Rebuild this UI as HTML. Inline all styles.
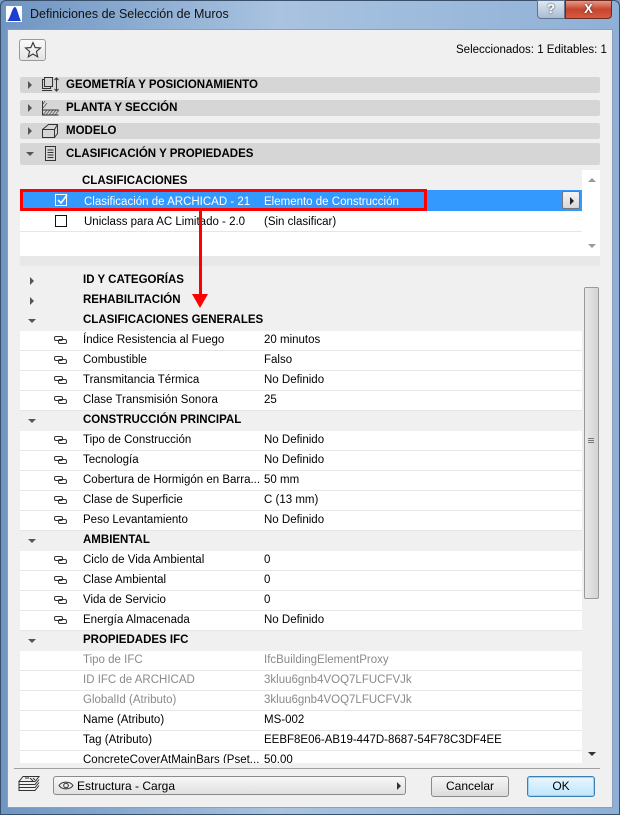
<!DOCTYPE html>
<html><head><meta charset="utf-8"><style>
*{box-sizing:border-box;margin:0;padding:0}
body{width:620px;height:815px;overflow:hidden;background:#7a9cc6;font-family:"Liberation Sans",Arial,sans-serif;font-size:11.5px;color:#000;position:relative}
.abs{position:absolute}
#frame{left:0;top:0;width:620px;height:815px;background:linear-gradient(90deg,#6f95c2 0%,#a9c3e0 45%,#8fb0d6 100%);border:1px solid #3a4f6a;border-radius:6px 6px 0 0}
#content{left:7px;top:29px;width:606px;height:779px;background:#f0f0f0;border:1px solid #8aa0ba}
.title{left:30px;top:7px;font-size:12.5px;color:#111}
.bar{left:20px;width:580px;height:16px;background:#d6d6d6;border-radius:2px;font-weight:bold;font-size:11.5px}
.bar span{position:absolute;left:46px;top:2px}
.tri{position:absolute;width:0;height:0;border-top:4px solid transparent;border-bottom:4px solid transparent;border-left:4px solid #555}
.trid{position:absolute;width:0;height:0;border-left:4px solid transparent;border-right:4px solid transparent;border-top:4px solid #555}
.row{position:absolute;left:0;width:562px;height:20px;background:#fff;border-bottom:1px solid #e6e6e6}
.row.g{background:#f0f0f0;border-bottom:none;font-weight:bold}
.row .n{position:absolute;left:63px;top:3px;white-space:nowrap}
.row .v{position:absolute;left:244px;top:3px;white-space:nowrap}
.row.gr .n,.row.gr .v{color:#8a8a8a}
.lk{position:absolute;left:34px;top:5px;width:14px;height:9px}
.btn{background:linear-gradient(#f6f6f6,#dcdcdc);border:1px solid #8a8a8a;border-radius:3px;text-align:center;line-height:19px;font-size:12px}
</style></head><body>
<div class="abs" id="frame"></div>
<svg class="abs" style="left:6px;top:6px" width="16" height="16"><rect width="16" height="16" fill="#fff"/><path d="M1 15 C4 14 6 1 9 1 C11 1 13 12 15 15Z" fill="#1d3fcf"/></svg>
<div class="abs title">Definiciones de Selección de Muros</div>
<div class="abs" style="left:537px;top:0;width:28px;height:19px;background:linear-gradient(#dfe8f3,#aabcd2);border:1px solid #5d7390;border-radius:0 0 0 4px;text-align:center;font-weight:bold;color:#fff;font-size:13px;text-shadow:0 0 2px #333">?</div>
<div class="abs" style="left:565px;top:0;width:47px;height:19px;background:linear-gradient(#e69a86,#c6452d 50%,#d75b40);border:1px solid #6b2b22;border-radius:0 0 4px 0;text-align:center;font-weight:bold;color:#fff;font-size:13px;text-shadow:0 0 2px #333">X</div>
<div class="abs" id="content"></div>
<div class="abs" style="left:19px;top:39px;width:27px;height:22px;border:1px solid #999;border-radius:3px;background:linear-gradient(#fafafa,#e4e4e4)"></div>
<svg class="abs" style="left:24px;top:41px" width="18" height="18"><path d="M9 1.5 L11.2 6.6 L16.5 7 L12.4 10.5 L13.7 15.8 L9 13 L4.3 15.8 L5.6 10.5 L1.5 7 L6.8 6.6Z" fill="none" stroke="#333" stroke-width="1.1"/></svg>
<div class="abs" style="left:456px;top:44px;font-size:11.5px">Seleccionados: 1 Editables: 1</div>

<div class="abs bar" style="top:77px"><div class="tri" style="left:8px;top:4px"></div><svg style="position:absolute;left:21px;top:0" width="22" height="16"><rect x="1.5" y="2.5" width="8" height="9" fill="none" stroke="#333"/><rect x="3.5" y="0.5" width="8" height="9" fill="#d6d6d6" stroke="#333"/><path d="M1 13.5h10M15.5 1v13M13.5 3l2-2 2 2M13.5 12l2 2 2-2" stroke="#333" fill="none"/></svg><span>GEOMETRÍA Y POSICIONAMIENTO</span></div>
<div class="abs bar" style="top:100px"><div class="tri" style="left:8px;top:4px"></div><svg style="position:absolute;left:21px;top:0" width="22" height="16"><path d="M1.5 1v14h16M1.5 10h16" stroke="#333" fill="none"/><path d="M2 15l4-5M5 15l4-5M8 15l4-5M11 15l4-5M14 15l4-5M2 8l4-5M2 4l2-3" stroke="#555" fill="none" stroke-width=".8"/></svg><span>PLANTA Y SECCIÓN</span></div>
<div class="abs bar" style="top:123px"><div class="tri" style="left:8px;top:4px"></div><svg style="position:absolute;left:21px;top:0" width="22" height="16"><path d="M1.5 6.5h12v8h-12zM1.5 6.5l6-5h9v9l-3 4M13.5 6.5l3-5" stroke="#333" fill="none"/></svg><span>MODELO</span></div>
<div class="abs bar" style="top:143px;height:22px"><div class="trid" style="left:6px;top:9px"></div><svg style="position:absolute;left:24px;top:3px" width="14" height="16"><rect x="1.5" y=".5" width="10" height="14" fill="none" stroke="#333"/><path d="M3.5 4h6M3.5 6.5h6M3.5 9h6M3.5 11.5h6" stroke="#333"/></svg><span style="top:5px">CLASIFICACIÓN Y PROPIEDADES</span></div>

<!-- classification list -->
<div class="abs" style="left:20px;top:170px;width:580px;height:86px;background:#fff"></div>
<div class="abs" style="left:20px;top:170px;width:562px;height:20px;background:#f0f0f0"></div>
<div class="abs" style="left:82px;top:175px;font-weight:bold">CLASIFICACIONES</div>
<div class="abs" style="left:20px;top:190px;width:562px;height:21px;background:#3399ff"></div>
<div class="abs" style="left:562px;top:191px;width:18px;height:18px;background:linear-gradient(#f5f5f5,#d8d8d8);border:1px solid #777;border-radius:2px"><div class="tri" style="left:7px;top:5px;border-left-color:#222"></div></div>
<div class="abs" style="left:55px;top:194px;width:12px;height:12px;border:1px solid #fff"></div>
<svg class="abs" style="left:56px;top:194px" width="12" height="12"><path d="M2 6l3 3 6-8" stroke="#fff" stroke-width="1.6" fill="none"/></svg>
<div class="abs" style="left:84px;top:196px;color:#fff">Clasificación de ARCHICAD - 21</div>
<div class="abs" style="left:264px;top:196px;color:#fff">Elemento de Construcción</div>
<div class="abs" style="left:20px;top:211px;width:562px;height:21px;border-bottom:1px solid #e6e6e6"></div>
<div class="abs" style="left:55px;top:215px;width:12px;height:12px;border:1px solid #111"></div>
<div class="abs" style="left:84px;top:216px">Uniclass para AC Limitado - 2.0</div>
<div class="abs" style="left:264px;top:216px">(Sin clasificar)</div>
<div class="trid abs" style="left:588px;top:178px;transform:rotate(180deg);border-top-color:#999"></div>
<div class="trid abs" style="left:588px;top:244px;border-top-color:#999"></div>
<div class="abs" style="left:20px;top:256px;width:580px;height:10px;background:#e8e8e8"></div>

<!-- property table -->
<div class="abs" style="left:20px;top:266px;width:580px;height:497px;background:#f0f0f0;overflow:hidden">
<div style="position:absolute;left:0;top:3px;width:562px;height:4px;background:#f0f0f0"></div>
<div style="position:absolute;left:0;top:5px;width:562px">
<div class="row g" style="top:0"><div class="tri" style="left:10px;top:6px"></div><span class="n">ID Y CATEGORÍAS</span></div>
<div class="row g" style="top:20px"><div class="tri" style="left:10px;top:6px"></div><span class="n">REHABILITACIÓN</span></div>
<div class="row g" style="top:40px"><div class="trid" style="left:8px;top:8px"></div><span class="n">CLASIFICACIONES GENERALES</span></div>
<div class="row" style="top:60px"><svg class="lk"><rect x=".5" y=".5" width="8" height="4" rx="1.5" fill="none" stroke="#333"/><rect x="4.5" y="3.5" width="8" height="4" rx="1.5" fill="none" stroke="#333"/></svg><span class="n">Índice Resistencia al Fuego</span><span class="v">20 minutos</span></div>
<div class="row" style="top:80px"><svg class="lk"><rect x=".5" y=".5" width="8" height="4" rx="1.5" fill="none" stroke="#333"/><rect x="4.5" y="3.5" width="8" height="4" rx="1.5" fill="none" stroke="#333"/></svg><span class="n">Combustible</span><span class="v">Falso</span></div>
<div class="row" style="top:100px"><svg class="lk"><rect x=".5" y=".5" width="8" height="4" rx="1.5" fill="none" stroke="#333"/><rect x="4.5" y="3.5" width="8" height="4" rx="1.5" fill="none" stroke="#333"/></svg><span class="n">Transmitancia Térmica</span><span class="v">No Definido</span></div>
<div class="row" style="top:120px"><svg class="lk"><rect x=".5" y=".5" width="8" height="4" rx="1.5" fill="none" stroke="#333"/><rect x="4.5" y="3.5" width="8" height="4" rx="1.5" fill="none" stroke="#333"/></svg><span class="n">Clase Transmisión Sonora</span><span class="v">25</span></div>
<div class="row g" style="top:140px"><div class="trid" style="left:8px;top:8px"></div><span class="n">CONSTRUCCIÓN PRINCIPAL</span></div>
<div class="row" style="top:160px"><svg class="lk"><rect x=".5" y=".5" width="8" height="4" rx="1.5" fill="none" stroke="#333"/><rect x="4.5" y="3.5" width="8" height="4" rx="1.5" fill="none" stroke="#333"/></svg><span class="n">Tipo de Construcción</span><span class="v">No Definido</span></div>
<div class="row" style="top:180px"><svg class="lk"><rect x=".5" y=".5" width="8" height="4" rx="1.5" fill="none" stroke="#333"/><rect x="4.5" y="3.5" width="8" height="4" rx="1.5" fill="none" stroke="#333"/></svg><span class="n">Tecnología</span><span class="v">No Definido</span></div>
<div class="row" style="top:200px"><svg class="lk"><rect x=".5" y=".5" width="8" height="4" rx="1.5" fill="none" stroke="#333"/><rect x="4.5" y="3.5" width="8" height="4" rx="1.5" fill="none" stroke="#333"/></svg><span class="n">Cobertura de Hormigón en Barra...</span><span class="v">50 mm</span></div>
<div class="row" style="top:220px"><svg class="lk"><rect x=".5" y=".5" width="8" height="4" rx="1.5" fill="none" stroke="#333"/><rect x="4.5" y="3.5" width="8" height="4" rx="1.5" fill="none" stroke="#333"/></svg><span class="n">Clase de Superficie</span><span class="v">C (13 mm)</span></div>
<div class="row" style="top:240px"><svg class="lk"><rect x=".5" y=".5" width="8" height="4" rx="1.5" fill="none" stroke="#333"/><rect x="4.5" y="3.5" width="8" height="4" rx="1.5" fill="none" stroke="#333"/></svg><span class="n">Peso Levantamiento</span><span class="v">No Definido</span></div>
<div class="row g" style="top:260px"><div class="trid" style="left:8px;top:8px"></div><span class="n">AMBIENTAL</span></div>
<div class="row" style="top:280px"><svg class="lk"><rect x=".5" y=".5" width="8" height="4" rx="1.5" fill="none" stroke="#333"/><rect x="4.5" y="3.5" width="8" height="4" rx="1.5" fill="none" stroke="#333"/></svg><span class="n">Ciclo de Vida Ambiental</span><span class="v">0</span></div>
<div class="row" style="top:300px"><svg class="lk"><rect x=".5" y=".5" width="8" height="4" rx="1.5" fill="none" stroke="#333"/><rect x="4.5" y="3.5" width="8" height="4" rx="1.5" fill="none" stroke="#333"/></svg><span class="n">Clase Ambiental</span><span class="v">0</span></div>
<div class="row" style="top:320px"><svg class="lk"><rect x=".5" y=".5" width="8" height="4" rx="1.5" fill="none" stroke="#333"/><rect x="4.5" y="3.5" width="8" height="4" rx="1.5" fill="none" stroke="#333"/></svg><span class="n">Vida de Servicio</span><span class="v">0</span></div>
<div class="row" style="top:340px"><svg class="lk"><rect x=".5" y=".5" width="8" height="4" rx="1.5" fill="none" stroke="#333"/><rect x="4.5" y="3.5" width="8" height="4" rx="1.5" fill="none" stroke="#333"/></svg><span class="n">Energía Almacenada</span><span class="v">No Definido</span></div>
<div class="row g" style="top:360px"><div class="trid" style="left:8px;top:8px"></div><span class="n">PROPIEDADES IFC</span></div>
<div class="row gr" style="top:380px"><span class="n">Tipo de IFC</span><span class="v">IfcBuildingElementProxy</span></div>
<div class="row gr" style="top:400px"><span class="n">ID IFC de ARCHICAD</span><span class="v">3kluu6gnb4VOQ7LFUCFVJk</span></div>
<div class="row gr" style="top:420px"><span class="n">GlobalId (Atributo)</span><span class="v">3kluu6gnb4VOQ7LFUCFVJk</span></div>
<div class="row" style="top:440px"><span class="n">Name (Atributo)</span><span class="v">MS-002</span></div>
<div class="row" style="top:460px"><span class="n">Tag (Atributo)</span><span class="v">EEBF8E06-AB19-447D-8687-54F78C3DF4EE</span></div>
<div class="row" style="top:480px"><span class="n">ConcreteCoverAtMainBars (Pset...</span><span class="v">50,00</span></div>
</div>
<div class="trid" style="left:568px;top:56px;transform:rotate(180deg);border-top-color:#333"></div>
<div style="position:absolute;left:564px;top:21px;width:15px;height:312px;background:linear-gradient(90deg,#e8e8e8,#d4d4d4);border:1px solid #999;border-radius:2px"></div>
<div style="position:absolute;left:568px;top:172px;width:6px;height:1px;background:#777;box-shadow:0 2px 0 #777,0 4px 0 #777"></div>
<div class="trid" style="left:568px;top:486px;border-top-color:#333"></div>
</div>

<!-- red annotation -->
<div class="abs" style="left:20px;top:189px;width:407px;height:22px;border:3px solid #f00"></div>
<div class="abs" style="left:199px;top:211px;width:3px;height:86px;background:#f00"></div>
<div class="abs" style="left:192px;top:294px;width:0;height:0;border-left:8px solid transparent;border-right:8px solid transparent;border-top:14px solid #f00"></div>

<!-- footer -->
<div class="abs" style="left:14px;top:768px;width:586px;height:1px;background:#a0a0a0"></div>
<svg class="abs" style="left:17px;top:775px" width="24" height="20"><path d="M6 1.5h16l-4 5H2zM2 6.5v3h16l4-5M2 9.5v3h16l4-5M2 12.5v3h16l4-5" fill="none" stroke="#333"/><path d="M8 3h4M13 3l3 3M16 3l2 2" stroke="#333"/></svg>
<div class="abs" style="left:53px;top:776px;width:353px;height:19px;background:linear-gradient(#f8f8f8,#e0e0e0);border:1px solid #8a8a8a;border-radius:3px"></div>
<svg class="abs" style="left:58px;top:780px" width="16" height="11"><path d="M1 5.5C4 1 12 1 15 5.5C12 10 4 10 1 5.5Z" fill="none" stroke="#333"/><circle cx="8" cy="5.5" r="2.3" fill="none" stroke="#333"/></svg>
<div class="abs" style="left:77px;top:779px;font-size:12px">Estructura - Carga</div>
<div class="tri abs" style="left:397px;top:782px;border-left-color:#333"></div>
<div class="abs btn" style="left:431px;top:776px;width:78px;height:21px">Cancelar</div>
<div class="abs btn" style="left:527px;top:776px;width:68px;height:21px;border-color:#3c7fb1;background:linear-gradient(#eaf6fd,#bee6fd);box-shadow:inset 0 0 0 1px #9fd3f5">OK</div>
</body></html>
